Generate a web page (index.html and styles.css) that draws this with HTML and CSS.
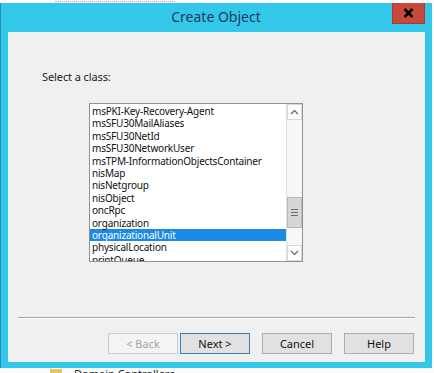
FILE: index.html
```html
<!DOCTYPE html>
<html lang="en">
<head>
    <meta charset="UTF-8">
    <meta name="viewport" content="width=device-width, initial-scale=1.0">
    <title>Create Object</title>
    <link rel="stylesheet" href="styles.css">
</head>
<body>
    <div class="desk-top"><span class="desk-mark"></span></div>
    <div class="window">
        <div class="titlebar">
            <div class="title">Create Object</div>
            <div class="close">
                <svg width="11" height="10" viewBox="0 0 11 10"><path d="M1.5 1 L9.5 9 M9.5 1 L1.5 9" stroke="#000" stroke-width="2.6"/></svg>
            </div>
        </div>
        <div class="client">
            <div class="prompt">Select a class:</div>
            <div class="listbox">
                <ul class="items">
                    <li>msPKI-Key-Recovery-Agent</li>
                    <li>msSFU30MailAliases</li>
                    <li>msSFU30NetId</li>
                    <li>msSFU30NetworkUser</li>
                    <li>msTPM-InformationObjectsContainer</li>
                    <li>nisMap</li>
                    <li>nisNetgroup</li>
                    <li>nisObject</li>
                    <li>oncRpc</li>
                    <li>organization</li>
                    <li class="selected">organizationalUnit</li>
                    <li>physicalLocation</li>
                    <li>printQueue</li>
                </ul>
                <div class="scrollbar">
                    <div class="sb-btn">
                        <svg width="9" height="6" viewBox="0 0 9 6"><path d="M1 5 L4.5 1.5 L8 5" fill="none" stroke="#606060" stroke-width="1.2"/></svg>
                    </div>
                    <div class="sb-track">
                        <div class="sb-thumb"><span></span><span></span><span></span></div>
                    </div>
                    <div class="sb-btn">
                        <svg width="9" height="6" viewBox="0 0 9 6"><path d="M1 1 L4.5 4.5 L8 1" fill="none" stroke="#606060" stroke-width="1.2"/></svg>
                    </div>
                </div>
            </div>
            <div class="separator"></div>
            <div class="buttons">
                <button class="btn" type="button" disabled>&lt; Back</button>
                <button class="btn default" type="button">Next &gt;</button>
                <button class="btn spaced" type="button">Cancel</button>
                <button class="btn spaced" type="button">Help</button>
            </div>
        </div>
    </div>
    <div class="desk-bottom">
        <span class="folder"></span>
        <span class="desk-text">Domain Controllers</span>
    </div>
</body>
</html>
```

FILE: styles.css
```css
* { margin: 0; padding: 0; box-sizing: border-box; }
body { width: 434px; height: 373px; overflow: hidden; background: #fbfbfb; font-family: "Noto Sans", "Liberation Sans", sans-serif; color: #1a1a1a; }

.desk-top { height: 3px; }
.desk-mark { display: block; margin-left: 55px; width: 120px; height: 2px; border-bottom: 1px dotted #d9a0a8; }

.window { width: 432px; height: 365px; background: #33c7ea; border-left: 1px solid #2891ad; padding: 0 7px 6px 7px; display: flex; flex-direction: column; }
.titlebar { height: 29px; display: flex; align-items: flex-start; }
.title { flex: 1; padding-left: 32px; text-align: center; font-size: 14px; line-height: 28px; color: #173f55; }
.close { flex: 0 0 33px; height: 21px; background: #c9483d; border: 1px solid #a83a30; border-top: none; display: flex; align-items: center; justify-content: center; }
.close svg { display: block; }

.client { flex: 1; background: #f0f0f0; display: flex; flex-direction: column; }
.prompt { margin: 37px 0 0 34px; font-size: 11px; line-height: 15px; color: #222; letter-spacing: -0.1px; }

.listbox { margin: 19px 0 0 81px; width: 214px; height: 159px; border: 1px solid #8e9299; background: #fff; display: flex; overflow: hidden; }
.items { list-style: none; flex: 1; padding-top: 1px; font-size: 10px; line-height: 12.4px; letter-spacing: -0.2px; color: #111; white-space: nowrap; overflow: hidden; }
.items li { padding-left: 2px; }
.items .selected { background: #1a8ae6; color: #fff; }

.scrollbar { width: 16px; background: #f7f7f7; border-left: 1px solid #e0e0e0; display: flex; flex-direction: column; }
.sb-btn { height: 16px; border: 1px solid #d8d8d8; background: #fdfdfd; display: flex; align-items: center; justify-content: center; }
.sb-track { flex: 1; display: flex; flex-direction: column; justify-content: flex-end; padding-bottom: 17px; }
.sb-thumb { height: 31px; background: #d6d6d6; border: 1px solid #b8b8b8; display: flex; flex-direction: column; align-items: center; justify-content: center; gap: 2px; }
.sb-thumb span { display: block; width: 7px; height: 1px; background: #6b6b6b; }

.separator { margin: 55px 0 0 10px; width: 397px; height: 2px; border-top: 1px solid #a0a0a0; border-bottom: 1px solid #ffffff; }

.buttons { margin: 14px 11px 0 0; display: flex; justify-content: flex-end; gap: 2px; }
.btn { width: 70px; height: 21px; background: #e1e1e1; border: 1px solid #adadad; font-family: inherit; font-size: 11px; color: #111; }
.btn:disabled { background: #f4f4f4; border-color: #cdcdcd; color: #a3a3a3; }
.btn.default { border-color: #3c7fb1; }
.btn.spaced { margin-left: 10px; }

.desk-bottom { height: 5px; display: flex; align-items: flex-start; padding-left: 50px; gap: 12px; }
.folder { width: 12px; height: 5px; background: #e8c660; margin-top: 1px; }
.desk-text { font-size: 11px; line-height: 11px; color: #222; }
```
